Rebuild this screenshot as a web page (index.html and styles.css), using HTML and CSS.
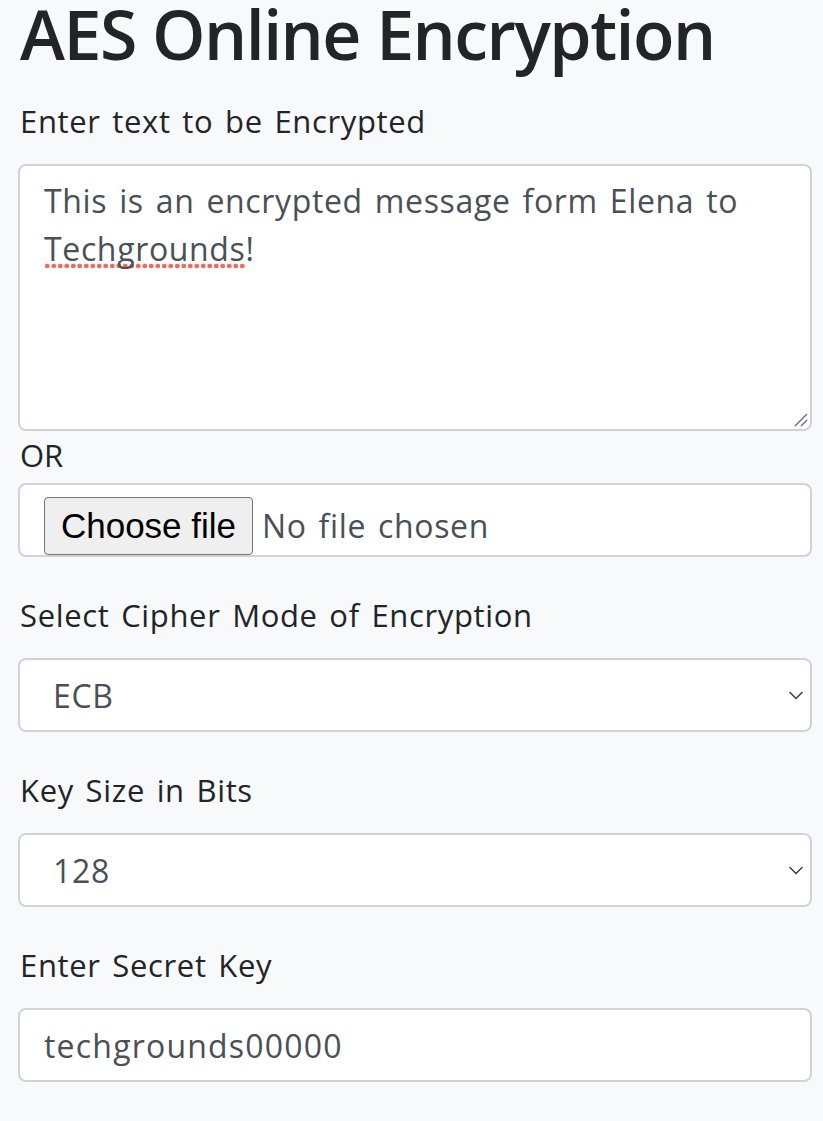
FILE: index.html
```html
<!DOCTYPE html>
<html lang="en">
<head>
<meta charset="utf-8">
<title>AES Online Encryption</title>
<link rel="stylesheet" href="styles.css">
</head>
<body>
<main class="page">
  <h1 class="title">AES Online Encryption</h1>

  <div class="group group-text">
    <label class="label" for="msg">Enter text to be Encrypted</label>
    <div class="textarea" id="msg">This is an encrypted message form Elena to <span class="misspelled">Techgrounds</span>!<svg class="grip" width="14" height="14" viewBox="0 0 14 14"><path d="M1 13L13 1M7 13L13 7" stroke="#6c6c6c" stroke-width="1.4" fill="none"/></svg></div>
  </div>

  <div class="or">OR</div>

  <div class="file-control">
    <span class="file-btn">Choose file</span>
    <span class="file-name">No file chosen</span>
  </div>

  <div class="group">
    <label class="label" for="mode">Select Cipher Mode of Encryption</label>
    <div class="select-wrap">
      <select class="select" id="mode">
        <option>ECB</option>
        <option>CBC</option>
      </select>
      <svg class="chevron" width="16" height="10" viewBox="0 0 16 10"><path d="M1.5 2l6.5 6.5 6.5-6.5" stroke="#343a40" stroke-width="1.4" fill="none"/></svg>
    </div>
  </div>

  <div class="group">
    <label class="label" for="size">Key Size in Bits</label>
    <div class="select-wrap">
      <select class="select" id="size">
        <option>128</option>
        <option>192</option>
        <option>256</option>
      </select>
      <svg class="chevron" width="16" height="10" viewBox="0 0 16 10"><path d="M1.5 2l6.5 6.5 6.5-6.5" stroke="#343a40" stroke-width="1.4" fill="none"/></svg>
    </div>
  </div>

  <div class="group">
    <label class="label" for="key">Enter Secret Key</label>
    <input class="input" id="key" type="text" value="techgrounds00000">
  </div>
</main>
</body>
</html>
```

FILE: styles.css
```css
* { box-sizing: border-box; }

html, body {
  margin: 0;
  background: #f8f9fa;
}

body {
  font-family: "Open Sans", "Noto Sans", sans-serif;
  color: #212529;
}

.page {
  padding: 0 11px 0 18px;
}

.title {
  margin: 0 0 31px 2px;
  font-size: 68px;
  line-height: 68px;
  font-weight: 600;
  letter-spacing: -1.5px;
}

.label {
  display: block;
  margin: 0 0 20px 2px;
  font-size: 31px;
  line-height: 45px;
  letter-spacing: 0.65px;
  word-spacing: 3px;
}

.group {
  margin-top: 36px;
}

.group-text {
  margin-top: 0;
}

.textarea {
  position: relative;
  height: 267px;
  padding: 11px 24px;
  background: #fff;
  border: 2px solid #ced4da;
  border-radius: 8px;
  font-size: 32px;
  line-height: 48px;
  letter-spacing: 0.65px;
  word-spacing: 3px;
  color: #495057;
}

.misspelled {
  background-image: radial-gradient(circle, #ec6a5e 2.1px, transparent 2.7px);
  background-size: 6.5px 6px;
  background-repeat: repeat-x;
  background-position: 0 calc(100% - 1px);
}

.grip {
  position: absolute;
  right: 2px;
  bottom: 2px;
}

.or {
  margin: 2px 0 5px 2px;
  font-size: 31px;
  line-height: 45px;
}

.file-control {
  display: flex;
  align-items: flex-start;
  gap: 9px;
  height: 74px;
  padding: 12px 24px 0;
  background: #fff;
  border: 2px solid #ced4da;
  border-radius: 8px;
  overflow: hidden;
}

.file-btn {
  display: flex;
  align-items: center;
  justify-content: center;
  width: 209px;
  height: 58px;
  background: #efefef;
  border: 1.5px solid #767676;
  border-radius: 4px;
  font-family: "Liberation Sans", Arial, sans-serif;
  font-size: 35px;
  color: #000;
}

.file-name {
  font-size: 32px;
  line-height: 58px;
  letter-spacing: 0.65px;
  word-spacing: 3px;
  color: #495057;
}

.select-wrap {
  position: relative;
}

.select, .input {
  display: block;
  width: 100%;
  height: 74px;
  margin: 0;
  background: #fff;
  border: 2px solid #ced4da;
  border-radius: 8px;
  font-family: "Open Sans", "Noto Sans", sans-serif;
  font-size: 32px;
  letter-spacing: 0.65px;
  color: #495057;
  outline: none;
}

.select {
  appearance: none;
  -webkit-appearance: none;
  padding: 0 40px 0 33px;
}

.input {
  padding: 0 24px;
  letter-spacing: 1.2px;
}

.chevron {
  position: absolute;
  right: 8px;
  top: 32px;
  pointer-events: none;
}
```
